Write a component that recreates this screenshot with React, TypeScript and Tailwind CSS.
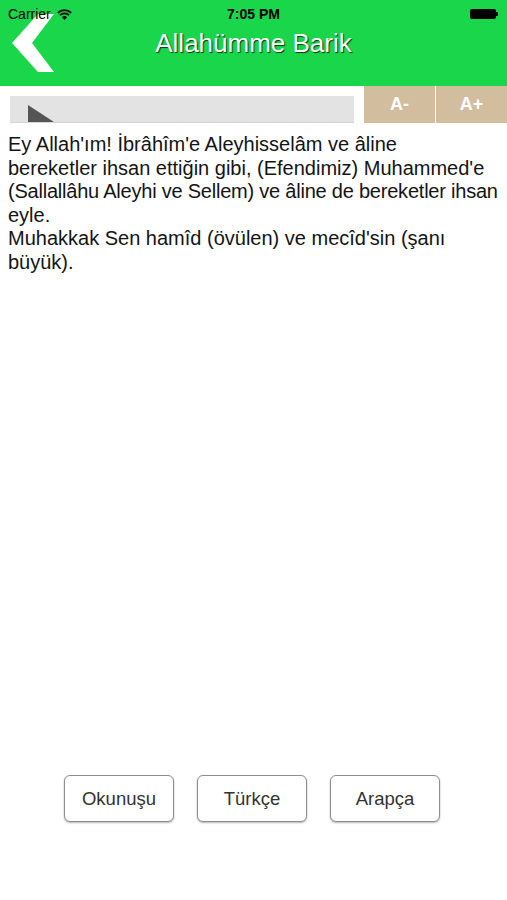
import React from "react";

const font = { fontFamily: '"Liberation Sans", Arial, sans-serif' };

const lines = [
  { t: "Ey Allah'ım! İbrâhîm'e Aleyhisselâm ve âline", c: "" },
  { t: "bereketler ihsan ettiğin gibi, (Efendimiz) Muhammed'e", c: "" },
  { t: "(Sallallâhu Aleyhi ve Sellem) ve âline de bereketler ihsan", c: "tracking-[-0.22px]" },
  { t: "eyle.", c: "" },
  { t: "Muhakkak Sen hamîd (övülen) ve mecîd'sin (şanı", c: "" },
  { t: "büyük).", c: "" },
];

export default function App() {
  return (
    <div className="w-[507px] min-h-[900px] bg-white flex flex-col" style={font}>
      {/* Header */}
      <div className="relative h-[86px] bg-[#19d64a] flex flex-col">
        {/* back chevron */}
        <svg className="absolute left-0 top-0" width="60" height="80" viewBox="0 0 60 80">
          <polygon points="38,14 54,14 32,43 54,72 38,72 12,43" fill="#ffffff" />
        </svg>
        {/* status bar */}
        <div className="relative h-[28px] flex items-center px-[8px] text-[14px] text-black">
          <div className="flex items-center gap-[6px] w-[120px]">
            <span>Carrier</span>
            <svg width="15" height="11" viewBox="0 0 15 11">
              <path d="M7.5 11 L5 8.3 A3.6 3.6 0 0 1 10 8.3 Z" fill="#000" />
              <path d="M2.9 6.2 A6.5 6.5 0 0 1 12.1 6.2" stroke="#000" strokeWidth="1.8" fill="none" />
              <path d="M0.8 3.9 A9.5 9.5 0 0 1 14.2 3.9" stroke="#000" strokeWidth="1.8" fill="none" />
            </svg>
          </div>
          <div className="flex-1 text-center font-bold text-[14px]">7:05 PM</div>
          <div className="w-[120px] flex justify-end pr-[1px]">
            <div className="flex items-center">
              <div className="w-[26px] h-[10px] bg-black rounded-[2px]" />
              <div className="w-[2px] h-[4px] bg-black rounded-r-[1px]" />
            </div>
          </div>
        </div>
        {/* title */}
        <div className="relative flex-1 flex items-start justify-center">
          <span className="text-white text-[26px] leading-[30px] [text-shadow:1px_1px_1px_rgba(0,0,0,0.75)]">
            Allahümme Barik
          </span>
        </div>
      </div>

      {/* toolbar */}
      <div className="flex items-end h-[37px]">
        <div className="ml-[10px] w-[344px] h-[27px] bg-[#e3e3e3] border-b border-[#d6d6d6] overflow-hidden relative">
          <svg className="absolute left-[18px] top-[9px]" width="26" height="34" viewBox="0 0 26 34">
            <polygon points="0,0 26,17 0,34" fill="#555555" />
          </svg>
        </div>
        <div className="ml-auto flex h-[37px]">
          <button className="w-[71px] h-full bg-[#d3bd9f] text-white font-bold text-[18px] flex items-center justify-center">
            A-
          </button>
          <div className="w-[1px] h-full bg-white" />
          <button className="w-[71px] h-full bg-[#d3bd9f] text-white font-bold text-[18px] flex items-center justify-center">
            A+
          </button>
        </div>
      </div>

      {/* content */}
      <div className="flex-1 px-[8px] pt-[10px] text-[20px] leading-[23.6px] text-[#141414]">
        {lines.map((l, i) => (
          <div key={i} className={`whitespace-nowrap ${l.c}`}>
            {l.t}
          </div>
        ))}
      </div>

      {/* bottom buttons */}
      <div className="flex pl-[64px] gap-[23px] pb-[78px]">
        {["Okunuşu", "Türkçe", "Arapça"].map((t) => (
          <button
            key={t}
            className="w-[110px] h-[47px] bg-white border-[1.5px] border-[#8e8e8e] rounded-[6px] shadow-[0_1px_2px_rgba(0,0,0,0.3)] text-[18.5px] text-[#333]"
          >
            {t}
          </button>
        ))}
      </div>
    </div>
  );
}
